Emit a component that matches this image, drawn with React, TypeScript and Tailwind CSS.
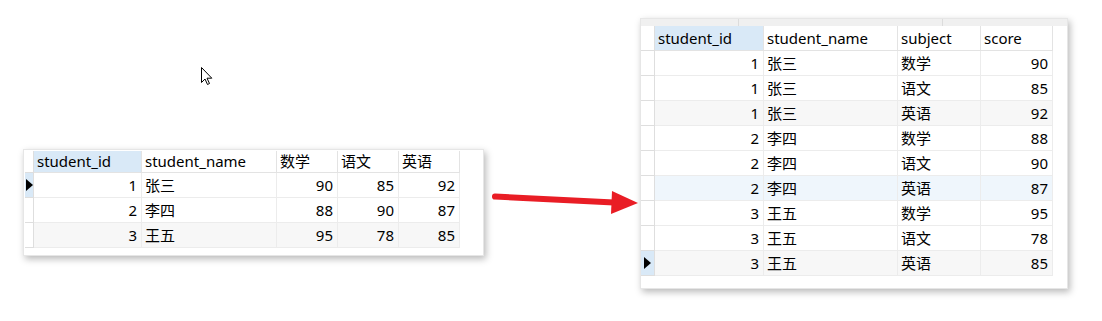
import React from 'react';

type Cell = { text: string; align: 'left' | 'right' };

const font = { fontFamily: '"Noto Sans", "Noto Sans CJK SC", sans-serif' };

const leftCols = [108, 135, 61, 61, 61];
const leftHead = ['student_id', 'student_name', '数学', '语文', '英语'];
const leftRows = [
  ['1', '张三', '90', '85', '92'],
  ['2', '李四', '88', '90', '87'],
  ['3', '王五', '95', '78', '85'],
];
const leftAlign: Cell['align'][] = ['right', 'left', 'right', 'right', 'right'];

const rightCols = [109, 134, 83, 72];
const rightHead = ['student_id', 'student_name', 'subject', 'score'];
const rightRows = [
  ['1', '张三', '数学', '90'],
  ['1', '张三', '语文', '85'],
  ['1', '张三', '英语', '92'],
  ['2', '李四', '数学', '88'],
  ['2', '李四', '语文', '90'],
  ['2', '李四', '英语', '87'],
  ['3', '王五', '数学', '95'],
  ['3', '王五', '语文', '78'],
  ['3', '王五', '英语', '85'],
];
const rightAlign: Cell['align'][] = ['right', 'left', 'left', 'right'];

const Marker = () => (
  <svg width="7" height="12" viewBox="0 0 7 12">
    <path d="M0 0 L7 6 L0 12 Z" fill="#000" />
  </svg>
);

function rowBg(i: number, hover: number) {
  if (i === hover) return 'bg-[#eff6fc]';
  if (i % 3 === 2) return 'bg-[#f7f7f7]';
  return 'bg-white';
}

const Grid: React.FC<{
  cols: number[];
  indicator: number;
  head: string[];
  rows: string[][];
  align: Cell['align'][];
  headH: string;
  selected: number;
  hover: number;
}> = ({ cols, indicator, head, rows, align, headH, selected, hover }) => (
  <div className="flex flex-col items-start w-fit text-[15px] text-black leading-none" style={font}>
    <div className={`flex ${headH}`}>
      <div className="border-r border-b border-[#dedede] bg-white" style={{ width: indicator }} />
      {head.map((h, i) => (
        <div
          key={h}
          className={`flex items-center pl-[3px] border-r border-b border-[#e3e3e3] ${i === 0 ? 'bg-[#d9e9f7]' : 'bg-white'}`}
          style={{ width: cols[i] }}
        >
          {h}
        </div>
      ))}
    </div>
    {rows.map((r, ri) => (
      <div key={ri} className={`flex h-[25px] ${rowBg(ri, hover)}`}>
        <div
          className={`flex items-center justify-center border-r border-b border-[#dedede] ${ri === selected ? 'bg-[#d9e9f7]' : 'bg-white'}`}
          style={{ width: indicator }}
        >
          {ri === selected && <Marker />}
        </div>
        {r.map((c, ci) => (
          <div
            key={ci}
            className={`flex items-center border-r border-b border-[#ececec] ${align[ci] === 'right' ? 'justify-end pr-[4px]' : 'pl-[3px]'}`}
            style={{ width: cols[ci] }}
          >
            {c}
          </div>
        ))}
      </div>
    ))}
  </div>
);

export default function App() {
  return (
    <div className="relative w-[1102px] h-[321px] bg-white overflow-hidden">
      <div className="flex items-start">
        {/* Before: wide table */}
        <div className="ml-[23px] mt-[149px] w-[461px] h-[107px] pt-px pl-px bg-white border border-[#e6e6e6] shadow-[2px_3px_7px_rgba(0,0,0,0.28)]">
          <Grid
            cols={leftCols}
            indicator={9}
            head={leftHead}
            rows={leftRows}
            align={leftAlign}
            headH="h-[22px]"
            selected={0}
            hover={-1}
          />
        </div>

        {/* After: long table */}
        <div className="ml-[156px] mt-[18px] w-[428px] h-[271px] bg-white border border-[#e6e6e6] shadow-[2px_3px_7px_rgba(0,0,0,0.28)]">
          <div className="relative h-[7px] bg-[#f0f0f0]">
            <div className="absolute left-[97px] top-0 h-[7px] w-px bg-[#dcdcdc]" />
            <div className="absolute left-[301px] top-0 h-[7px] w-px bg-[#dcdcdc]" />
          </div>
          <Grid
            cols={rightCols}
            indicator={14}
            head={rightHead}
            rows={rightRows}
            align={rightAlign}
            headH="h-[25px]"
            selected={8}
            hover={5}
          />
        </div>
      </div>

      {/* arrow annotation */}
      <svg className="absolute left-0 top-0" width="1102" height="321">
        <line x1="495" y1="196.5" x2="614" y2="202.5" stroke="#e91d25" strokeWidth="6" strokeLinecap="round" />
        <path d="M612 191 L638 203 L611 214 Z" fill="#e91d25" />
      </svg>

      {/* mouse cursor */}
      <svg className="absolute left-[200px] top-[66px]" width="14" height="21" viewBox="0 0 14 21">
        <path
          d="M1.5 1.5 L1.5 16.5 L5 13 L7.5 18.5 L9.5 17.5 L7 12.2 L11.8 12.2 Z"
          fill="#fff"
          stroke="#000"
          strokeWidth="1"
          strokeLinejoin="miter"
        />
      </svg>
    </div>
  );
}
